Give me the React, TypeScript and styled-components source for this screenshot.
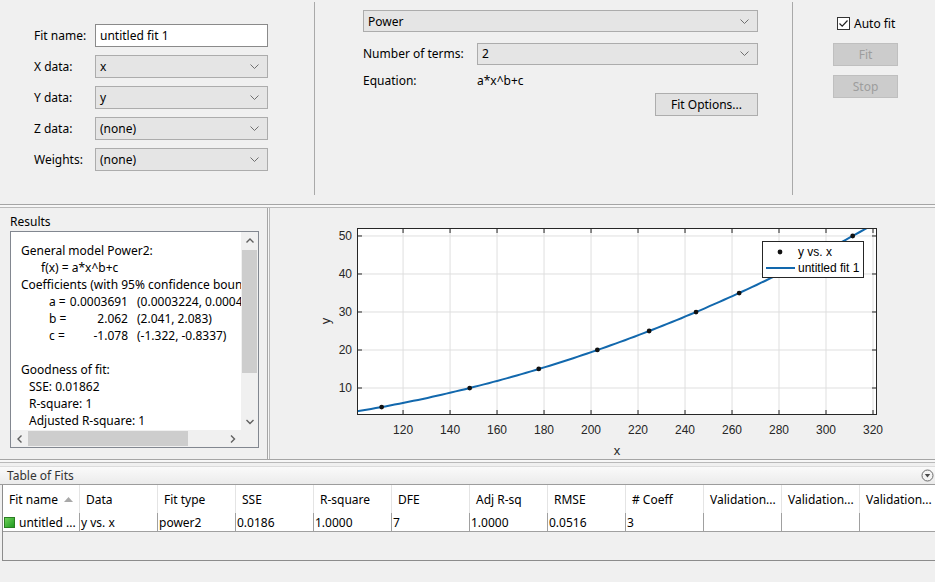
import React from "react";
import styled, { createGlobalStyle } from "styled-components";

const GlobalStyle = createGlobalStyle`
  html, body {
    margin: 0;
    padding: 0;
    background: #f0f0f0;
  }
  body {
    font-family: "Noto Sans", "Open Sans", sans-serif;
    font-size: 12px;
    color: #000;
  }
`;

const Window = styled.div`
  width: 935px;
  height: 582px;
  display: flex;
  flex-direction: column;
  background: #f0f0f0;
  overflow: hidden;
`;

// ---- top: data / model / fit panes ----

const TopArea = styled.div`
  height: 204px;
  flex-shrink: 0;
  display: flex;
`;

const DataPane = styled.div`
  width: 314px;
  box-sizing: border-box;
  padding: 24px 0 0 34px;
  display: flex;
  flex-direction: column;
  gap: 8px;
`;

const ModelPane = styled.div`
  width: 477px;
  box-sizing: border-box;
  padding: 10px 34px 0 48px;
  display: flex;
  flex-direction: column;
`;

const FitPane = styled.div`
  flex: 1;
  box-sizing: border-box;
  padding: 16px 0 0 40px;
  display: flex;
  flex-direction: column;
`;

const PaneDivider = styled.div`
  width: 1px;
  background: #a9a9a9;
  margin: 2px 0 9px;
`;

const FormRow = styled.div<{ $mt?: number }>`
  display: flex;
  align-items: center;
  height: 23px;
  margin-top: ${(p) => p.$mt ?? 0}px;
`;

const FieldLabel = styled.span<{ $w: number }>`
  width: ${(p) => p.$w}px;
  flex-shrink: 0;
  line-height: 16px;
`;

const TextBox = styled.div`
  width: 173px;
  height: 23px;
  box-sizing: border-box;
  background: #fff;
  border: 1px solid #8a8a8a;
  padding: 0 4px;
  display: flex;
  align-items: center;
`;

const Select = styled.div<{ $w: number; $h?: number }>`
  width: ${(p) => p.$w}px;
  height: ${(p) => p.$h ?? 23}px;
  box-sizing: border-box;
  background: #e5e5e5;
  border: 1px solid #acacac;
  padding: 0 8px 0 4px;
  display: flex;
  align-items: center;
  justify-content: space-between;
`;

const Chevron = () => (
  <svg width="9" height="5" viewBox="0 0 9 5">
    <polyline points="0.5,0.5 4.5,4.5 8.5,0.5" fill="none" stroke="#6f6f6f" strokeWidth="1" />
  </svg>
);

const EquationRow = styled.div`
  display: flex;
  margin-top: 8px;
  height: 16px;
  line-height: 16px;
`;

const ButtonRow = styled.div`
  display: flex;
  justify-content: flex-end;
  margin-top: 4px;
`;

const PushButton = styled.div<{ $w: number; $disabled?: boolean }>`
  width: ${(p) => p.$w}px;
  height: 23px;
  box-sizing: border-box;
  display: flex;
  align-items: center;
  justify-content: center;
  background: ${(p) => (p.$disabled ? "#cccccc" : "#e1e1e1")};
  border: 1px solid ${(p) => (p.$disabled ? "#bfbfbf" : "#adadad")};
  color: ${(p) => (p.$disabled ? "#9d9d9d" : "#000")};
`;

const CheckRow = styled.label`
  display: flex;
  align-items: center;
  gap: 4px;
  height: 14px;
  margin-left: 4px;
  margin-bottom: 13px;
`;

const FitButtons = styled.div`
  display: flex;
  flex-direction: column;
  gap: 9px;
`;

// ---- splitters ----

const HSplit = styled.div`
  height: 4px;
  flex-shrink: 0;
  box-sizing: border-box;
  border-top: 1px solid #a5a5a5;
  border-bottom: 1px solid #b9b9b9;
  background: #f7f7f7;
`;

const VSplit = styled.div`
  width: 3px;
  flex-shrink: 0;
  box-sizing: border-box;
  border-left: 1px solid #a5a5a5;
  border-right: 1px solid #b9b9b9;
  background: #f7f7f7;
`;

// ---- middle: results + plot ----

const MiddleArea = styled.div`
  height: 251px;
  flex-shrink: 0;
  display: flex;
`;

const ResultsPane = styled.div`
  width: 267px;
  box-sizing: border-box;
  padding: 6px 8px 11px 10px;
  display: flex;
  flex-direction: column;
`;

const PaneTitle = styled.div`
  height: 17px;
  line-height: 16px;
`;

const ResultsBox = styled.div`
  flex: 1;
  border: 1px solid #828790;
  background: #fff;
  display: grid;
  grid-template-columns: 1fr 17px;
  grid-template-rows: 1fr 17px;
  overflow: hidden;
`;

const ResultsText = styled.div`
  padding: 10px 0 0 10px;
  overflow: hidden;
  white-space: nowrap;
`;

const ResultLine = styled.div<{ $indent?: number }>`
  height: 17px;
  line-height: 17px;
  padding-left: ${(p) => p.$indent ?? 0}px;
`;

const CoefRow = styled.div`
  height: 17px;
  line-height: 17px;
  padding-left: 28px;
  display: grid;
  grid-template-columns: 20px 59px auto;
`;

const CoefValue = styled.span`
  text-align: right;
`;

const CoefBounds = styled.span`
  padding-left: 9px;
`;

const VScroll = styled.div`
  background: #f0f0f0;
  display: flex;
  flex-direction: column;
  align-items: center;
`;

const HScroll = styled.div`
  background: #f0f0f0;
  display: flex;
  align-items: center;
`;

const ScrollArrow = styled.div`
  width: 17px;
  height: 17px;
  flex-shrink: 0;
  display: flex;
  align-items: center;
  justify-content: center;
`;

const VThumb = styled.div`
  width: 15px;
  height: 123px;
  margin-top: 1px;
  background: #cdcdcd;
`;

const HThumb = styled.div`
  width: 160px;
  height: 15px;
  background: #cdcdcd;
`;

const Spacer = styled.div`
  flex: 1;
`;

const Corner = styled.div`
  background: #f0f0f0;
`;

const Arrow = ({ dir }: { dir: "up" | "down" | "left" | "right" }) => {
  const pts = {
    up: "0.5,4.5 4,1 7.5,4.5",
    down: "0.5,1 4,4.5 7.5,1",
    left: "4.5,0.5 1,4 4.5,7.5",
    right: "1,0.5 4.5,4 1,7.5",
  }[dir];
  const vertical = dir === "up" || dir === "down";
  return (
    <svg width={vertical ? 8 : 6} height={vertical ? 6 : 8}>
      <polyline points={pts} fill="none" stroke="#606060" strokeWidth="1.4" />
    </svg>
  );
};

const ChartPane = styled.div`
  flex: 1;
  display: flex;
`;

// plot mapping
const X0 = 100.4;
const X1 = 321.7;
const Y0 = 2.9;
const Y1 = 52.1;
const AX = { left: 87, top: 20, width: 520, height: 187 };
const sx = (x: number) => AX.left + ((x - X0) / (X1 - X0)) * AX.width;
const sy = (y: number) => AX.top + ((Y1 - y) / (Y1 - Y0)) * AX.height;
const model = (x: number) => 0.0003691 * Math.pow(x, 2.062) - 1.078;
const inverse = (y: number) => Math.pow((y + 1.078) / 0.0003691, 1 / 2.062);

const xTicks = [120, 140, 160, 180, 200, 220, 240, 260, 280, 300, 320];
const yTicks = [10, 20, 30, 40, 50];
const samples = [5, 10, 15, 20, 25, 30, 35, 40, 45, 50].map((y) => [inverse(y), y + 0.02 * Math.sin(y)]);

const curve = (() => {
  const pts: string[] = [];
  for (let x = X0; x <= 320; x += 2) pts.push(`${sx(x).toFixed(1)},${sy(model(x)).toFixed(1)}`);
  return pts.join(" ");
})();

const FitPlot = () => {
  const right = AX.left + AX.width;
  const bottom = AX.top + AX.height;
  const tickFont = { fontFamily: "'Liberation Sans', Arial, sans-serif", fontSize: 12, fill: "#262626" };
  return (
    <svg width="665" height="251" viewBox="0 0 665 251">
      <defs>
        <clipPath id="axclip">
          <rect x={AX.left} y={AX.top} width={AX.width} height={AX.height} />
        </clipPath>
      </defs>
      <rect x={AX.left} y={AX.top} width={AX.width} height={AX.height} fill="#fff" />
      {xTicks.map((t) => (
        <line key={`gx${t}`} x1={sx(t)} x2={sx(t)} y1={AX.top} y2={bottom} stroke="#dfdfdf" strokeWidth="1" />
      ))}
      {yTicks.map((t) => (
        <line key={`gy${t}`} x1={AX.left} x2={right} y1={sy(t)} y2={sy(t)} stroke="#dfdfdf" strokeWidth="1" />
      ))}
      <g clipPath="url(#axclip)">
        <polyline points={curve} fill="none" stroke="#1268ad" strokeWidth="2" />
        {samples.map(([x, y]) => (
          <circle key={y} cx={sx(x)} cy={sy(y)} r="2.4" fill="#111" />
        ))}
      </g>
      <rect x={AX.left + 0.5} y={AX.top + 0.5} width={AX.width - 1} height={AX.height - 1} fill="none" stroke="#262626" strokeWidth="1" />
      {xTicks.map((t) => (
        <g key={`tx${t}`}>
          <line x1={sx(t)} x2={sx(t)} y1={bottom} y2={bottom - 5} stroke="#262626" />
          <line x1={sx(t)} x2={sx(t)} y1={AX.top} y2={AX.top + 5} stroke="#262626" />
          <text x={sx(t)} y={226} textAnchor="middle" {...tickFont}>
            {t}
          </text>
        </g>
      ))}
      {yTicks.map((t) => (
        <g key={`ty${t}`}>
          <line x1={AX.left} x2={AX.left + 5} y1={sy(t)} y2={sy(t)} stroke="#262626" />
          <line x1={right} x2={right - 5} y1={sy(t)} y2={sy(t)} stroke="#262626" />
          <text x={82} y={sy(t) + 4} textAnchor="end" {...tickFont}>
            {t}
          </text>
        </g>
      ))}
      <text x={347} y={247} textAnchor="middle" {...tickFont} fontSize={13}>
        x
      </text>
      <text x={0} y={0} textAnchor="middle" {...tickFont} fontSize={13} transform="translate(60 113) rotate(-90)">
        y
      </text>
      <rect x={492.5} y={33.5} width={101} height={36} fill="#fff" stroke="#262626" strokeWidth="1" />
      <circle cx={510} cy={44} r="2.4" fill="#111" />
      <text x={528} y={48} {...tickFont} fill="#000">
        y vs. x
      </text>
      <line x1={496} x2={525} y1={60} y2={60} stroke="#1268ad" strokeWidth="2" />
      <text x={528} y={64} {...tickFont} fill="#000">
        untitled fit 1
      </text>
    </svg>
  );
};

// ---- bottom: table of fits ----

const TableArea = styled.div`
  flex: 1;
  display: flex;
  flex-direction: column;
  padding-top: 3px;
`;

const TableBar = styled.div`
  height: 19px;
  box-sizing: border-box;
  border-top: 1px solid #dcdcdc;
  border-bottom: 1px solid #9c9c9c;
  background: linear-gradient(#fafafa, #ebebeb);
  display: flex;
  align-items: center;
  justify-content: space-between;
  padding: 0 1px 0 7px;
  color: #333;
`;

const FitsTable = styled.div`
  margin-left: 2px;
  height: 76px;
  box-sizing: border-box;
  border-left: 1px solid #8c8c8c;
  border-bottom: 1px solid #8c8c8c;
  display: flex;
  flex-direction: column;
  overflow: hidden;
`;

const TableRow = styled.div<{ $head?: boolean }>`
  display: grid;
  grid-template-columns: 77px repeat(11, 78px);
  height: ${(p) => (p.$head ? 28 : 19)}px;
  flex-shrink: 0;
  background: #fff;
  border-bottom: ${(p) => (p.$head ? "none" : "1px solid #a0a0a0")};
  box-sizing: border-box;
`;

const HeadCell = styled.div`
  border-right: 1px solid #e4e4e4;
  padding-left: 6px;
  display: flex;
  align-items: center;
  gap: 6px;
  white-space: nowrap;
  overflow: hidden;
`;

const DataCell = styled.div`
  border-right: 1px solid #a0a0a0;
  padding-left: 1px;
  display: flex;
  align-items: center;
  gap: 4px;
  white-space: nowrap;
  overflow: hidden;
`;

const TableEmpty = styled.div`
  flex: 1;
  background: #f0f0f0;
`;

const FitSwatch = styled.span`
  width: 11px;
  height: 11px;
  flex-shrink: 0;
  background: linear-gradient(135deg, #6fd15a, #1f9a1f);
  border: 1px solid #2a7d22;
  box-sizing: border-box;
`;

const SortArrow = () => (
  <svg width="9" height="5" viewBox="0 0 9 5">
    <polygon points="0,5 4.5,0 9,5" fill="#a8a8a8" />
  </svg>
);

const headers = ["Data", "Fit type", "SSE", "R-square", "DFE", "Adj R-sq", "RMSE", "# Coeff", "Validation...", "Validation...", "Validation..."];
const row = ["y vs. x", "power2", "0.0186", "1.0000", "7", "1.0000", "0.0516", "3", "", "", ""];

export default function App() {
  return (
    <>
      <GlobalStyle />
      <Window>
        <TopArea>
          <DataPane>
            <FormRow>
              <FieldLabel $w={61}>Fit name:</FieldLabel>
              <TextBox>untitled fit 1</TextBox>
            </FormRow>
            {[
              ["X data:", "x"],
              ["Y data:", "y"],
              ["Z data:", "(none)"],
              ["Weights:", "(none)"],
            ].map(([label, value]) => (
              <FormRow key={label}>
                <FieldLabel $w={61}>{label}</FieldLabel>
                <Select $w={173}>
                  {value}
                  <Chevron />
                </Select>
              </FormRow>
            ))}
          </DataPane>
          <PaneDivider />
          <ModelPane>
            <Select $w={395} $h={22}>
              Power
              <Chevron />
            </Select>
            <FormRow $mt={10}>
              <FieldLabel $w={114}>Number of terms:</FieldLabel>
              <Select $w={281} $h={22}>
                2
                <Chevron />
              </Select>
            </FormRow>
            <EquationRow>
              <FieldLabel $w={114}>Equation:</FieldLabel>
              <span>a*x^b+c</span>
            </EquationRow>
            <ButtonRow>
              <PushButton $w={103}>Fit Options...</PushButton>
            </ButtonRow>
          </ModelPane>
          <PaneDivider />
          <FitPane>
            <CheckRow>
              <svg width="13" height="13" viewBox="0 0 13 13">
                <rect x="0.5" y="0.5" width="12" height="12" fill="#fff" stroke="#333" />
                <polyline points="2.5,6.5 5.2,9.2 10.5,3.5" fill="none" stroke="#222" strokeWidth="1.2" />
              </svg>
              Auto fit
            </CheckRow>
            <FitButtons>
              <PushButton $w={65} $disabled>
                Fit
              </PushButton>
              <PushButton $w={65} $disabled>
                Stop
              </PushButton>
            </FitButtons>
          </FitPane>
        </TopArea>
        <HSplit />
        <MiddleArea>
          <ResultsPane>
            <PaneTitle>Results</PaneTitle>
            <ResultsBox>
              <ResultsText>
                <ResultLine>General model Power2:</ResultLine>
                <ResultLine $indent={20}>f(x) = a*x^b+c</ResultLine>
                <ResultLine>Coefficients (with 95% confidence bounds):</ResultLine>
                <CoefRow>
                  <span>a =</span>
                  <CoefValue>0.0003691</CoefValue>
                  <CoefBounds>(0.0003224, 0.0004158)</CoefBounds>
                </CoefRow>
                <CoefRow>
                  <span>b =</span>
                  <CoefValue>2.062</CoefValue>
                  <CoefBounds>(2.041, 2.083)</CoefBounds>
                </CoefRow>
                <CoefRow>
                  <span>c =</span>
                  <CoefValue>-1.078</CoefValue>
                  <CoefBounds>(-1.322, -0.8337)</CoefBounds>
                </CoefRow>
                <ResultLine />
                <ResultLine>Goodness of fit:</ResultLine>
                <ResultLine $indent={8}>SSE: 0.01862</ResultLine>
                <ResultLine $indent={8}>R-square: 1</ResultLine>
                <ResultLine $indent={8}>Adjusted R-square: 1</ResultLine>
              </ResultsText>
              <VScroll>
                <ScrollArrow>
                  <Arrow dir="up" />
                </ScrollArrow>
                <VThumb />
                <Spacer />
                <ScrollArrow>
                  <Arrow dir="down" />
                </ScrollArrow>
              </VScroll>
              <HScroll>
                <ScrollArrow>
                  <Arrow dir="left" />
                </ScrollArrow>
                <HThumb />
                <Spacer />
                <ScrollArrow>
                  <Arrow dir="right" />
                </ScrollArrow>
              </HScroll>
              <Corner />
            </ResultsBox>
          </ResultsPane>
          <VSplit />
          <ChartPane>
            <FitPlot />
          </ChartPane>
        </MiddleArea>
        <HSplit />
        <TableArea>
          <TableBar>
            Table of Fits
            <svg width="13" height="13" viewBox="0 0 13 13">
              <circle cx="6.5" cy="6.5" r="5.5" fill="#f4f4f4" stroke="#6a6a6a" />
              <polygon points="3.8,5 9.2,5 6.5,8.5" fill="#4a4a4a" />
            </svg>
          </TableBar>
          <FitsTable>
            <TableRow $head>
              <HeadCell>
                Fit name
                <SortArrow />
              </HeadCell>
              {headers.map((h, i) => (
                <HeadCell key={i}>{h}</HeadCell>
              ))}
            </TableRow>
            <TableRow>
              <DataCell>
                <FitSwatch />
                untitled ...
              </DataCell>
              {row.map((v, i) => (
                <DataCell key={i}>{v}</DataCell>
              ))}
            </TableRow>
            <TableEmpty />
          </FitsTable>
        </TableArea>
      </Window>
    </>
  );
}
